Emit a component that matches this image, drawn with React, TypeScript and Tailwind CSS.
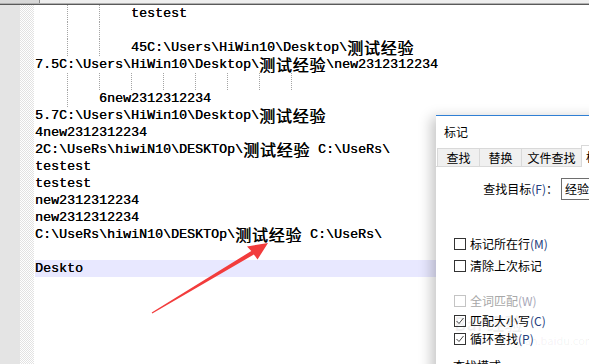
import React from "react";

type Seg = { t: string; cjk?: boolean };
type Line = { guides: number; segs: Seg[]; hl?: boolean };

const C = "测试经验";
const lines: Line[] = [
  { guides: 3, segs: [{ t: "testest" }] },
  { guides: 3, segs: [] },
  { guides: 3, segs: [{ t: "45C:\\Users\\HiWin10\\Desktop\\" }, { t: C, cjk: true }] },
  { guides: 0, segs: [{ t: "7.5C:\\Users\\HiWin10\\Desktop\\" }, { t: C, cjk: true }, { t: "\\new2312312234" }] },
  { guides: 9, segs: [] },
  { guides: 2, segs: [{ t: "6new2312312234" }] },
  { guides: 0, segs: [{ t: "5.7C:\\Users\\HiWin10\\Desktop\\" }, { t: C, cjk: true }] },
  { guides: 0, segs: [{ t: "4new2312312234" }] },
  { guides: 0, segs: [{ t: "2C:\\UseRs\\hiwiN10\\DESKTOp\\" }, { t: C, cjk: true }, { t: " C:\\UseRs\\" }] },
  { guides: 0, segs: [{ t: "testest" }] },
  { guides: 0, segs: [{ t: "testest" }] },
  { guides: 0, segs: [{ t: "new2312312234" }] },
  { guides: 0, segs: [{ t: "new2312312234" }] },
  { guides: 0, segs: [{ t: "C:\\UseRs\\hiwiN10\\DESKTOp\\" }, { t: C, cjk: true }, { t: " C:\\UseRs\\" }] },
  { guides: 0, segs: [] },
  { guides: 0, segs: [{ t: "Deskto" }], hl: true },
];

function EditorLine({ line }: { line: Line }) {
  const g = Array.from({ length: line.guides });
  return (
    <div
      className={
        "flex h-[17px] leading-[17px] whitespace-pre " + (line.hl ? "bg-[#e8e8ff]" : "")
      }
    >
      {g.map((_, i) => (
        <span
          key={i}
          className={
            "inline-block h-[17px] w-[32px] shrink-0 " +
            (i === 0 ? "" : "border-l border-dotted border-[#a4a4a4]")
          }
        />
      ))}
      {line.segs.map((s, i) =>
        s.cjk ? (
          <span
            key={i}
            className="font-['Noto_Sans_CJK_SC',sans-serif] text-[16px] font-normal tracking-[0.75px] leading-[17px] [text-shadow:0.5px_0_0_#000]"
          >
            {s.t}
          </span>
        ) : (
          <span key={i} className="[text-shadow:0.35px_0_0_#000]">
            {s.t}
          </span>
        )
      )}
    </div>
  );
}

function Check({ checked, disabled }: { checked?: boolean; disabled?: boolean }) {
  return (
    <span
      className={
        "inline-flex h-[12px] w-[12px] shrink-0 items-center justify-center border bg-white " +
        (disabled ? "border-[#c4c4c4]" : "border-[#333333]")
      }
    >
      {checked && (
        <svg width="10" height="10" viewBox="0 0 10 10">
          <polyline points="1.5,5 4,7.5 8.5,2" fill="none" stroke="#444" strokeWidth="1" />
        </svg>
      )}
    </span>
  );
}

function CheckRow({
  label,
  key2,
  checked,
  disabled,
  cls,
}: {
  label: string;
  key2?: string;
  checked?: boolean;
  disabled?: boolean;
  cls: string;
}) {
  return (
    <div className={"flex h-[18px] items-center pl-[18px] " + cls}>
      <Check checked={checked} disabled={disabled} />
      <span className={"ml-[4px] whitespace-nowrap " + (disabled ? "text-[#a8a8a8]" : "text-black")}>
        {label}
        {key2 && (
          <span className={disabled ? "text-[#a8a8b8]" : "text-[#24407e]"}>{key2}</span>
        )}
      </span>
    </div>
  );
}

export default function App() {
  return (
    <div className="relative flex h-[364px] w-[589px] flex-col overflow-hidden bg-white">
      {/* top strip */}
      <div className="flex h-[3px]">
        <div className="w-[40px] bg-[#d8d8d8] border-r border-[#8a8a8a]" />
        <div className="flex-1 bg-[#eeeeee]" />
      </div>
      <div className="h-px bg-[#b0b0b0]" />
      <div className="h-px bg-[#5a5a5a]" />

      {/* editor */}
      <div className="flex flex-1">
        <div className="w-[20px] bg-[#e4e4e4]" />
        <div className="w-[14px] bg-[repeating-conic-gradient(#e2e2e2_0_25%,#ffffff_0_50%)] bg-[length:2px_2px]" />
        <div className="w-px" />
        <div className="flex-1 font-['Liberation_Mono','Noto_Sans_CJK_SC',monospace] text-[13.33px] text-black">
          {lines.map((l, i) => (
            <EditorLine key={i} line={l} />
          ))}
        </div>
      </div>

      {/* dialog */}
      <div className="absolute left-[436px] top-[115px] h-[260px] w-[220px] border-t border-[#2f7fd4] bg-white font-['Noto_Sans_CJK_SC',sans-serif] text-[12px] text-black shadow-[-5px_2px_12px_rgba(0,0,0,0.22)]">
        <div className="flex h-[32px] items-center pl-[8px] leading-none">标记</div>
        <div className="flex h-[18px] items-end pl-px">
          <div className="flex h-[18px] w-[42px] shrink-0 items-center justify-center border-l border-t border-[#d9d9d9] bg-[#f0f0f0] leading-none">
            查找
          </div>
          <div className="flex h-[18px] w-[42px] shrink-0 items-center justify-center border-l border-t border-[#d9d9d9] bg-[#f0f0f0] leading-none">
            替换
          </div>
          <div className="flex h-[18px] w-[60px] shrink-0 items-center justify-center border-l border-t border-[#d9d9d9] bg-[#f0f0f0] leading-none">
            文件查找
          </div>
          <div className="relative z-10 -mb-px flex h-[22px] w-[44px] shrink-0 items-center justify-start pl-[4px] border-l border-t border-r border-[#d9d9d9] bg-white leading-none">
            标记
          </div>
        </div>
        <div className="border-t border-[#d9d9d9]">
          <div className="mt-[11px] flex h-[22px] items-center">
            <div className="w-[125px] shrink-0 pr-[3px] text-right leading-none whitespace-nowrap">
              查找目标<span className="text-[#24407e]">(F)</span>：
            </div>
            <div className="flex h-[22px] w-[100px] shrink-0 items-center border border-[#6e6e6e] pl-[3px] leading-none">
              经验
            </div>
          </div>
          <CheckRow cls="mt-[35px]" label="标记所在行" key2="(M)" />
          <CheckRow cls="mt-[4px]" label="清除上次标记" />
          <CheckRow cls="mt-[17px]" label="全词匹配" key2="(W)" disabled />
          <CheckRow cls="mt-[2px]" label="匹配大小写" key2="(C)" checked />
          <CheckRow cls="mt-0" label="循环查找" key2="(P)" checked />
          <div className="mt-[9px] pl-[17px] leading-[18px]">查找模式</div>
        </div>
        {/* watermark */}
        <div className="pointer-events-none absolute left-[18px] top-[198px] text-[18px] font-bold leading-none text-black/[0.06]">
          Bai 经验
        </div>
        <div className="pointer-events-none absolute left-[64px] top-[219px] text-[11px] leading-none text-black/[0.06]">
          jingyan.baidu.com
        </div>
      </div>

      {/* red arrow annotation */}
      <svg className="pointer-events-none absolute left-0 top-0" width="589" height="364">
        <polygon
          points="152.3,313.4 253.9,254.4 257.5,259.5 268,243 247,246.5 251.3,251.0 151.7,312.6"
          fill="#f23c3c"
        />
      </svg>
    </div>
  );
}
